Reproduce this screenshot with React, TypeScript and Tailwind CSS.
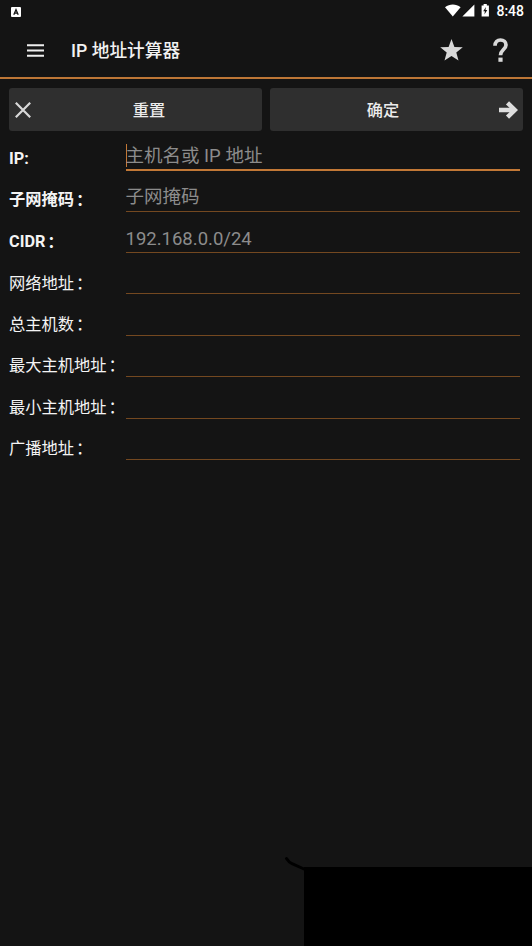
import clsx from 'clsx';

interface Field {
  label: string;
  wideColon?: boolean;
  strong?: boolean;
  hint?: string;
  focused?: boolean;
}

const fields: Field[] = [
  { label: 'IP:', strong: true, hint: '主机名或 IP 地址', focused: true },
  { label: '子网掩码', wideColon: true, strong: true, hint: '子网掩码' },
  { label: 'CIDR', wideColon: true, strong: true, hint: '192.168.0.0/24' },
  { label: '网络地址', wideColon: true },
  { label: '总主机数', wideColon: true },
  { label: '最大主机地址', wideColon: true },
  { label: '最小主机地址', wideColon: true },
  { label: '广播地址', wideColon: true },
];

const StatusBar = () => (
  <div className="flex h-[23px] items-center justify-between pr-2 pl-[11px]">
    <svg className="h-[10px] w-[10px]" viewBox="0 0 10 10">
      <rect width="10" height="10" rx="1" fill="#fff" />
      <path d="M2.8 7.8 5 2.6l2.2 5.2M3.7 6.2h2.6" fill="none" stroke="#141414" strokeWidth="1.3" />
    </svg>
    <div className="flex items-center">
      <svg className="-mt-[2px] h-[13px] w-[45px]" viewBox="0 0 45 13">
        <path d="M0 3.3C4.6-.5 11-.5 15.6 3.3L7.8 12.5Z" fill="#fff" />
        <path d="M29.4.6v11.8H17.4Z" fill="#fff" />
        <path d="M36.6 1.4h2V0h3.2v1.4h2.1v11h-7.3Z" fill="#fff" />
        <path d="m40.9 3-2.7 4.3h1.7l-.5 3.2 2.9-4.4h-1.8Z" fill="#141414" />
      </svg>
      <span className="ml-[6px] pb-px text-[14px] leading-none font-medium text-white">8:48</span>
    </div>
  </div>
);

const AppBar = () => (
  <header className="flex h-[56px] items-center border-b-2 border-[#bd7636] pr-[24px] pl-[27px]">
    <svg className="h-[13px] w-[17px]" viewBox="0 0 17 13">
      <path d="M0 1.3h17M0 6.5h17M0 11.7h17" stroke="#eee" strokeWidth="1.9" />
    </svg>
    <h1 className="ml-[27px] flex-1 pt-[4px] text-[17.7px] leading-none font-medium text-[#f2f2f2]">
      IP 地址计算器
    </h1>
    <svg className="h-[22px] w-[23px]" viewBox="0 0 23 22">
      <path
        d="m11.5 0 2.9 7.9 8.4.4-6.5 5.2 2.2 8.1-7-4.6-7 4.6 2.2-8.1L.2 8.3l8.4-.4Z"
        fill="#d8d8d8"
      />
    </svg>
    <svg className="ml-[30px] h-[24px] w-[15px]" viewBox="0 0 15 24">
      <path
        d="M2 7.8C2 4 4.3 2 7.5 2S13 4 13 7c0 4.3-5.5 4.9-5.5 10.2"
        fill="none"
        stroke="#d8d8d8"
        strokeWidth="3.7"
      />
      <path d="M5.4 19.6h4.2v4.2H5.4Z" fill="#d8d8d8" />
    </svg>
  </header>
);

const FieldRow = ({ label, wideColon, strong, hint, focused }: Field) => (
  <div className="flex h-[41.36px] pr-[12px] pl-[9px]">
    <label
      className={clsx(
        'w-[116.5px] shrink-0 text-[16.25px] leading-[24px] whitespace-nowrap text-[#f4f4f4]',
        strong ? 'pt-[16px] font-bold' : 'pt-[16.6px] font-normal',
      )}
    >
      {label}
      {wideColon && (
        <span className="relative top-px -left-[2px] font-['Noto_Sans_CJK_JP',sans-serif] leading-none">：</span>
      )}
    </label>
    <div
      className={clsx(
        'flex flex-1',
        focused ? 'mb-[1.4px] border-b-2 border-[#c27836]' : 'mb-[2px] border-b border-[#744820]',
      )}
    >
      {focused && <span className="mt-[13px] -mr-px h-[23px] w-px bg-[#c27836]" />}
      <span className="pt-[12px] text-[18.5px] leading-[27px] whitespace-nowrap text-[#8c8c8c]">{hint}</span>
    </div>
  </div>
);

export default function App() {
  return (
    <div className="relative h-[946px] w-[532px] overflow-hidden bg-[#141414] font-['Roboto','Noto_Sans_CJK_SC',sans-serif]">
      <StatusBar />
      <AppBar />

      <div className="grid grid-cols-2 gap-2 px-[9px] pt-[9px]">
        <button className="flex h-[43px] items-center rounded-[3px] bg-[#2f2f2f] px-[6px] text-[#ececec]">
          <svg className="h-4 w-4" viewBox="0 0 16 16">
            <path d="m.8.8 14.4 14.4M15.2.8.8 15.2" stroke="#d8d8d8" strokeWidth="2.2" />
          </svg>
          <span className="flex-1 pt-[4px] pl-[11px] text-center text-[16.2px] font-medium">重置</span>
        </button>
        <button className="flex h-[43px] items-center rounded-[3px] bg-[#2f2f2f] px-[5px] text-[#ececec]">
          <span className="flex-1 pt-[4px] pr-[8px] text-center text-[16.2px] font-medium">确定</span>
          <svg className="h-[18px] w-[19px]" viewBox="0 0 19 18">
            <path d="M0 9h15M8.5 1.8 15.9 9l-7.4 7.2" fill="none" stroke="#dedede" strokeWidth="4.4" />
          </svg>
        </button>
      </div>

      <form>
        {fields.map((field) => (
          <FieldRow key={field.label} {...field} />
        ))}
      </form>

      {/* blank overlay docked to the bottom right corner */}
      <div className="absolute right-0 bottom-0 h-[79px] w-[228px] bg-black">
        <svg className="absolute -top-[11px] -left-[20px] h-[16px] w-[22px]" viewBox="0 0 22 16">
          <path d="M2.5 2.5Q5 6.5 8 7.7L20 13" fill="none" stroke="#000" strokeWidth="3" strokeLinecap="round" />
        </svg>
      </div>
    </div>
  );
}
